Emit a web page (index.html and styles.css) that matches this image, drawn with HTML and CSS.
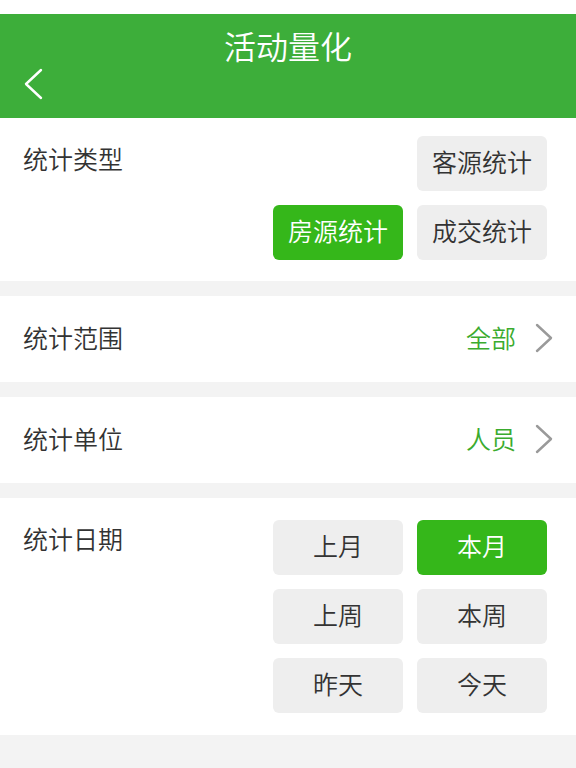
FILE: index.html
```html
<!DOCTYPE html>
<html lang="zh-CN">
<head>
    <meta charset="UTF-8">
    <meta name="viewport" content="width=device-width, initial-scale=1.0">
    <title>活动量化</title>
    <link rel="stylesheet" href="styles.css">
</head>
<body>

    <div class="status-bar"></div>

    <div class="header">
        <h1 class="title">活动量化</h1>
        <svg class="back" width="20" height="32" viewBox="0 0 20 32">
            <path d="M18 2 L3 16 L18 30" fill="none" stroke="#fff" stroke-width="2.4" stroke-linecap="round" stroke-linejoin="round"/>
        </svg>
    </div>

    <div class="block type-block">
        <span class="label label-type">统计类型</span>
        <div class="options">
            <div class="option first-right">客源统计</div>
            <div class="option active">房源统计</div>
            <div class="option">成交统计</div>
        </div>
    </div>

    <div class="row">
        <span class="label">统计范围</span>
        <div class="value">
            <span>全部</span>
            <svg width="18" height="30" viewBox="0 0 18 30">
                <path d="M2 2 L16 15 L2 28" fill="none" stroke="#9a9a9a" stroke-width="2.4" stroke-linecap="round" stroke-linejoin="round"/>
            </svg>
        </div>
    </div>

    <div class="row">
        <span class="label">统计单位</span>
        <div class="value">
            <span>人员</span>
            <svg width="18" height="30" viewBox="0 0 18 30">
                <path d="M2 2 L16 15 L2 28" fill="none" stroke="#9a9a9a" stroke-width="2.4" stroke-linecap="round" stroke-linejoin="round"/>
            </svg>
        </div>
    </div>

    <div class="block date-block">
        <span class="label label-date">统计日期</span>
        <div class="options">
            <div class="option">上月</div>
            <div class="option active">本月</div>
            <div class="option">上周</div>
            <div class="option">本周</div>
            <div class="option">昨天</div>
            <div class="option">今天</div>
        </div>
    </div>

</body>
</html>
```

FILE: styles.css
```css
body {
    font-family: "Noto Sans CJK SC", "Noto Sans", sans-serif;
    font-weight: 350;
    margin: 0;
    padding: 0;
    background-color: #f3f3f3;
    color: #333;
}

.status-bar {
    height: 14px;
    background-color: #fff;
}

.header {
    height: 104px;
    box-sizing: border-box;
    padding-top: 10px;
    background-color: #3dae3a;
    display: flex;
    flex-direction: column;
}

.title {
    margin: 0;
    font-size: 32px;
    font-weight: 350;
    line-height: 42px;
    text-align: center;
    color: #fff;
}

.back {
    display: block;
    margin: 2px 0 0 23px;
}

.block {
    display: flex;
    justify-content: space-between;
    align-items: flex-start;
    background-color: #fff;
    margin-bottom: 15px;
}

.type-block {
    padding: 18px 29px 21px 23px;
}

.date-block {
    padding: 22px 29px 22px 23px;
}

.label {
    font-size: 25px;
    line-height: 35px;
    color: #333;
}

.label-type {
    margin-top: 5px;
}

.label-date {
    margin-top: 1px;
}

.options {
    display: grid;
    grid-template-columns: 130px 130px;
    grid-auto-rows: 55px;
    gap: 14px;
}

.option {
    display: flex;
    align-items: center;
    justify-content: center;
    padding-bottom: 5px;
    box-sizing: border-box;
    background-color: #eeeeee;
    border-radius: 6px;
    font-size: 25px;
    color: #333;
}

.first-right {
    grid-column: 2;
}

.option.active {
    background-color: #35b71a;
    color: #fff;
}

.row {
    height: 86px;
    box-sizing: border-box;
    display: flex;
    justify-content: space-between;
    align-items: center;
    padding: 0 23px 4px;
    background-color: #fff;
    margin-bottom: 15px;
}

.value {
    display: flex;
    align-items: center;
    gap: 19px;
    font-size: 25px;
    color: #3aab2e;
}

.value svg {
    display: block;
    margin-top: 2px;
}
```
